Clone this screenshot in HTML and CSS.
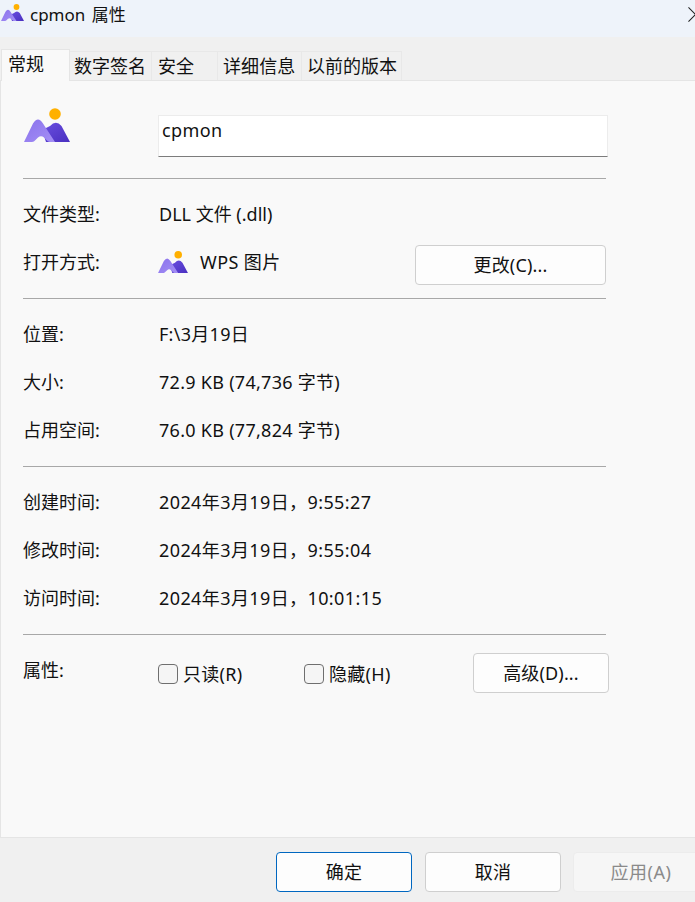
FILE: index.html
```html
<!DOCTYPE html>
<html lang="zh-CN">
<head>
<meta charset="utf-8">
<title>cpmon 属性</title>
<link rel="stylesheet" href="styles.css">
</head>
<body>
<div class="dialog">
  <header class="titlebar">
    <div class="title-group">
      <svg class="icon-title" viewBox="0 0 46 34" aria-hidden="true">
        <defs>
          <linearGradient id="gl" x1="0" y1="0" x2="1" y2="1"><stop offset="0" stop-color="#8a72ec"/><stop offset="1" stop-color="#a48ff5"/></linearGradient>
          <linearGradient id="gr" x1="0" y1="0" x2="1" y2="1"><stop offset="0" stop-color="#6a4fe0"/><stop offset="1" stop-color="#4a30c0"/></linearGradient>
          <symbol id="app" viewBox="0 0 46 34">
            <circle cx="31" cy="6" r="5.8" fill="#ffb000"/>
            <path d="M18 22 L26 18 Q32 11.5 37.5 18 L46 34 H22 Z" fill="url(#gr)"/>
            <path d="M0 34 L9 15.5 Q14 7.5 19 15.5 L31 34 H26 Q24 34 22.5 32 L20 29.5 Q17 27 14 29.5 L11.5 32 Q10 34 8 34 Z" fill="url(#gl)"/>
          </symbol>
        </defs>
        <use href="#app"/>
      </svg>
      <span class="title-text">cpmon 属性</span>
    </div>
    <svg class="close" viewBox="0 0 16 16" aria-hidden="true"><path d="M0.5 0.5 L15.5 15.5 M15.5 0.5 L0.5 15.5"/></svg>
  </header>

  <nav class="tabs">
    <div class="tab active">常规</div>
    <div class="tab tab-sign">数字签名</div>
    <div class="tab tab-sec">安全</div>
    <div class="tab tab-detail">详细信息</div>
    <div class="tab tab-prev">以前的版本</div>
  </nav>

  <main class="panel">
    <div class="name-row">
      <svg class="icon-large" viewBox="0 0 46 34" aria-hidden="true"><use href="#app"/></svg>
      <div class="name-input">cpmon</div>
    </div>
    <hr class="rule">

    <section class="group">
      <div class="row"><span class="label">文件类型:</span><span class="value">DLL 文件 (.dll)</span></div>
      <div class="row">
        <span class="label">打开方式:</span>
        <span class="value opener">
          <svg class="icon-open" viewBox="0 0 46 34" aria-hidden="true"><use href="#app"/></svg>
          <span class="opener-name">WPS 图片</span>
        </span>
        <button class="btn btn-change" type="button">更改(C)...</button>
      </div>
    </section>
    <hr class="rule short">

    <section class="group">
      <div class="row"><span class="label">位置:</span><span class="value num">F:\3月19日</span></div>
      <div class="row"><span class="label">大小:</span><span class="value num">72.9 KB (74,736 字节)</span></div>
      <div class="row"><span class="label">占用空间:</span><span class="value num">76.0 KB (77,824 字节)</span></div>
    </section>
    <hr class="rule short">

    <section class="group">
      <div class="row"><span class="label">创建时间:</span><span class="value date">2024年3月19日，9:55:27</span></div>
      <div class="row"><span class="label">修改时间:</span><span class="value date">2024年3月19日，9:55:04</span></div>
      <div class="row"><span class="label">访问时间:</span><span class="value date">2024年3月19日，10:01:15</span></div>
    </section>
    <hr class="rule short">

    <section class="attrs">
      <span class="label">属性:</span>
      <label class="check check-first"><span class="box"></span>只读(R)</label>
      <label class="check"><span class="box"></span>隐藏(H)</label>
      <button class="btn btn-adv" type="button">高级(D)...</button>
    </section>
  </main>

  <footer class="footer">
    <button class="btn btn-foot btn-primary" type="button">确定</button>
    <button class="btn btn-foot" type="button">取消</button>
    <button class="btn btn-foot btn-disabled" type="button">应用(A)</button>
  </footer>
</div>
</body>
</html>
```

FILE: styles.css
```css
* { box-sizing: border-box; }
html, body { margin: 0; padding: 0; height: 100%; overflow: hidden; }
body {
  font-family: "Noto Sans", "Noto Sans CJK SC", sans-serif;
  font-size: 18px;
  line-height: 24px;
  color: #111;
  background: #f9f9f9;
}
.dialog { width: 695px; height: 902px; display: flex; flex-direction: column; overflow: hidden; }

.titlebar {
  height: 37px;
  flex: none;
  background: #eef3fa;
  display: flex;
  align-items: flex-start;
  justify-content: space-between;
}
.title-group { display: flex; align-items: flex-start; padding-left: 1px; }
.icon-title { width: 23px; height: 17px; margin: 4px 6px 0 0; }
.title-text { margin-top: 3px; font-size: 17px; word-spacing: 2px; }
.close { width: 15px; height: 15px; flex: none; margin: 7px -8px 0 0; overflow: visible; }
.close path { fill: none; stroke: #222; stroke-width: 1.1; }

.tabs {
  height: 44px;
  flex: none;
  background: #f0f0f0;
  border-bottom: 1px solid #e5e5e5;
  display: flex;
  align-items: flex-end;
  padding-left: 1px;
  position: relative;
}
.tab {
  height: 29px;
  background: #f0f0f0;
  border: 1px solid #e8e8e8;
  border-bottom: none;
  border-left: none;
  padding-left: 4px;
  line-height: 28px;
  white-space: nowrap;
}
.tab.active {
  width: 69px;
  height: 32px;
  margin-bottom: -1px;
  background: #f9f9f9;
  border: 1px solid #e5e5e5;
  border-bottom: none;
  padding-left: 6px;
  line-height: 29px;
  position: relative;
}
.tab-sign { width: 82px; }
.tab-sec { width: 66px; padding-left: 6px; }
.tab-detail { width: 84px; padding-left: 5px; letter-spacing: .1px; }
.tab-prev { width: 100px; padding-left: 5px; }

.panel {
  flex: 1;
  background: #f9f9f9;
  border-left: 1px solid #e5e5e5;
  padding: 0 0 0 22px;
}
.name-row { display: flex; align-items: flex-start; height: 76px; padding-top: 27px; }
.icon-large { width: 46px; height: 34px; flex: none; margin-left: 1px; }
.name-input {
  width: 450px;
  height: 42px;
  margin: 7px 0 0 88px;
  background: #fff;
  border: 1px solid #ececec;
  border-bottom: 1px solid #7c7c7c;
  padding-left: 3px;
  line-height: 28px;
  letter-spacing: .4px;
}
.rule { width: 583px; height: 1px; margin: 21px 0 0; border: 0; background: #a8a8a8; }
.rule.short { margin-top: 12px; }
.group { padding-top: 11px; }
.row { height: 48px; display: flex; align-items: center; }
.label { width: 136px; flex: none; }
.value { white-space: nowrap; }
.num { letter-spacing: .28px; }
.date { letter-spacing: .4px; }
.opener { display: flex; align-items: center; width: 257px; margin-left: -1px; }
.opener-name { letter-spacing: .4px; }
.icon-open { width: 30px; height: 24px; margin-right: 12px; }

.btn {
  font: inherit;
  line-height: 24px;
  letter-spacing: .15px;
  color: #111;
  background: #fdfdfd;
  border: 1px solid #cfcfcf;
  border-radius: 4px;
  height: 40px;
  padding: 0;
  flex: none;
}
.btn-change { width: 191px; margin-top: 6px; }

.attrs { display: flex; align-items: center; height: 40px; margin-top: 18px; }
.attrs .label { margin-top: -7px; }
.check { display: flex; align-items: center; width: 146px; white-space: nowrap; margin-top: 2px; letter-spacing: .3px; }
.check-first { margin-left: -1px; }
.box {
  width: 20px;
  height: 20px;
  margin-right: 5px;
  background: #f5f5f5;
  border: 1px solid #6f6f6f;
  border-radius: 4px;
}
.btn-adv { width: 136px; margin-left: 23px; }

.footer {
  height: 65px;
  flex: none;
  background: #f0f0f0;
  border-top: 1px solid #e5e5e5;
  display: flex;
  gap: 13px;
  padding: 14px 0 0 276px;
}
.btn-foot { width: 136px; }
.btn-primary { border-color: #0067c0; }
.btn-disabled { margin-left: -1px; background: #f6f6f6; border-color: #ececec; color: #8a8a8a; letter-spacing: .5px; }
```
